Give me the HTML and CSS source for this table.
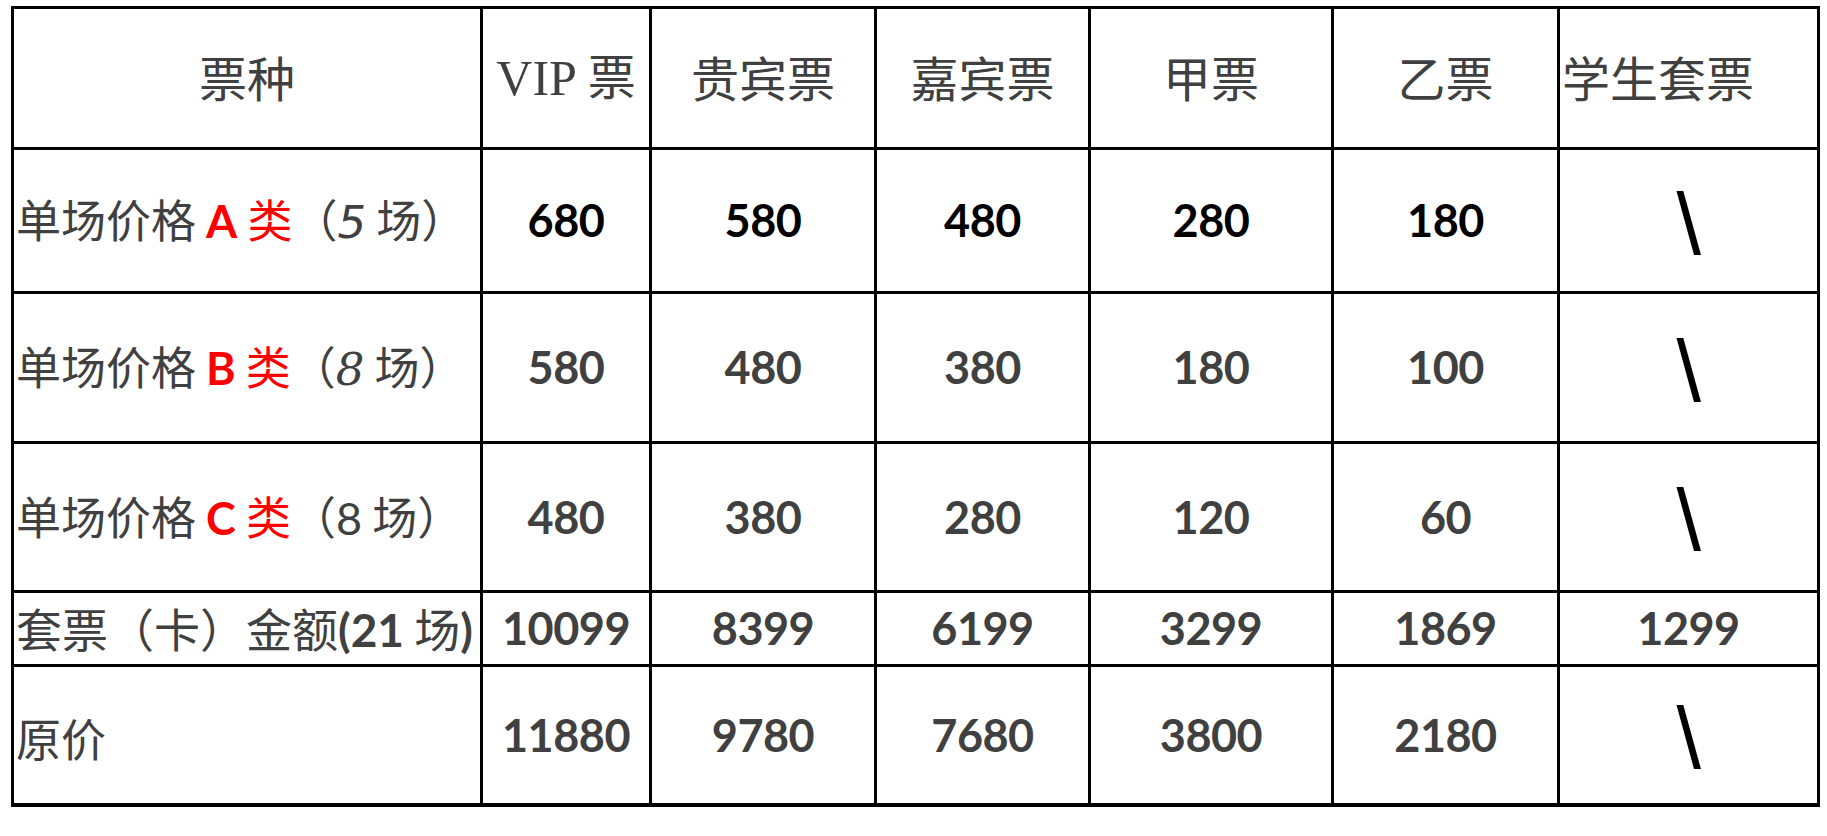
FILE: index.html
```html
<!DOCTYPE html>
<html lang="zh-CN">
<head>
<meta charset="utf-8">
<title>票价表</title>
<link rel="stylesheet" href="styles.css">
</head>
<body>
<table class="prices">
  <colgroup>
    <col class="c0"><col class="c1"><col class="c2"><col class="c3"><col class="c4"><col class="c5"><col class="c6">
  </colgroup>
  <tr class="r-head">
    <td class="head">票种</td>
    <td class="head"><span class="latin">VIP</span> 票</td>
    <td class="head">贵宾票</td>
    <td class="head">嘉宾票</td>
    <td class="head">甲票</td>
    <td class="head">乙票</td>
    <td class="head head-left">学生套票</td>
  </tr>
  <tr class="r-a">
    <td class="label">单场价格 <span class="red"><b class="num-in">A</b> 类</span>（<i class="num-in script">5</i> 场）</td>
    <td class="val dark">680</td>
    <td class="val dark">580</td>
    <td class="val dark">480</td>
    <td class="val dark">280</td>
    <td class="val dark">180</td>
    <td class="val slash"><span class="bs">\</span></td>
  </tr>
  <tr class="r-b">
    <td class="label">单场价格 <span class="red"><b class="num-in">B</b> 类</span>（<span class="kai">8</span> 场）</td>
    <td class="val">580</td>
    <td class="val">480</td>
    <td class="val">380</td>
    <td class="val">180</td>
    <td class="val">100</td>
    <td class="val slash"><span class="bs">\</span></td>
  </tr>
  <tr class="r-c">
    <td class="label">单场价格 <span class="red"><b class="num-in">C</b> 类</span>（<span class="plain">8</span> 场）</td>
    <td class="val">480</td>
    <td class="val">380</td>
    <td class="val">280</td>
    <td class="val">120</td>
    <td class="val">60</td>
    <td class="val slash"><span class="bs">\</span></td>
  </tr>
  <tr class="r-set">
    <td class="label">套票（卡）金额<b class="num-in">(21</b> 场<b class="num-in">)</b></td>
    <td class="val">10099</td>
    <td class="val">8399</td>
    <td class="val">6199</td>
    <td class="val">3299</td>
    <td class="val">1869</td>
    <td class="val">1299</td>
  </tr>
  <tr class="r-orig">
    <td class="label">原价</td>
    <td class="val">11880</td>
    <td class="val">9780</td>
    <td class="val">7680</td>
    <td class="val">3800</td>
    <td class="val">2180</td>
    <td class="val slash"><span class="bs">\</span></td>
  </tr>
</table>
</body>
</html>
```

FILE: styles.css
```css
html, body {
  margin: 0;
  padding: 0;
  background: #ffffff;
}

body {
  padding: 6px 0 0 11px;
  font-family: "Noto Sans CJK SC", sans-serif;
  color: #404040;
}

.prices {
  border-collapse: separate;
  border-spacing: 0;
  table-layout: fixed;
  width: 1809px;
  border-top: 3px solid #000;
  border-left: 3px solid #000;
}

.c0 { width: 469px; }
.c1 { width: 169px; }
.c2 { width: 225px; }
.c3 { width: 214px; }
.c4 { width: 243px; }
.c5 { width: 226px; }
.c6 { width: 260px; }

.prices td {
  box-sizing: border-box;
  border-right: 3px solid #000;
  border-bottom: 3px solid #000;
  padding: 0;
  vertical-align: middle;
  white-space: nowrap;
  overflow: hidden;
}

.r-head { height: 141px; }
.r-a { height: 144px; }
.r-b { height: 150px; }
.r-c { height: 149px; }
.r-set { height: 74px; }
.r-orig { height: 140px; }

.r-orig td { border-bottom-width: 4px; }

.head {
  font-size: 48px;
  line-height: 1;
  text-align: center;
  padding-bottom: 4px !important;
}

.head-left {
  text-align: left;
  padding-left: 2px !important;
}

.latin {
  font-family: "Liberation Serif", serif;
  font-weight: normal;
  font-size: 50px;
  letter-spacing: 0;
}

.label {
  font-size: 45px;
  line-height: 1;
  text-align: left;
  padding-left: 2px !important;
}

.r-set .label {
  font-size: 46px;
}

.r-orig .label {
  padding-top: 4px !important;
}

.red {
  color: #ff0000;
}

.num-in {
  font-family: Lato, "Liberation Sans", sans-serif;
  font-weight: 700;
  font-style: normal;
}

.script {
  font-family: "DejaVu Sans", sans-serif;
  font-style: italic;
  font-weight: normal;
  color: #404040;
}

.kai {
  font-family: "DejaVu Serif", serif;
  font-style: italic;
}

.plain {
  font-family: Lato, sans-serif;
}

.val {
  font-family: Lato, "Liberation Sans", sans-serif;
  font-weight: 700;
  font-size: 45px;
  letter-spacing: -0.5px;
  line-height: 1;
  text-align: center;
  color: #404040;
}

.val.dark {
  color: #000000;
}

.slash {
  color: #000;
}

.bs {
  font-family: "Liberation Sans", sans-serif;
  font-weight: normal;
  font-size: 88px;
  line-height: 1;
  display: inline-block;
  padding-top: 6px;
}
```
